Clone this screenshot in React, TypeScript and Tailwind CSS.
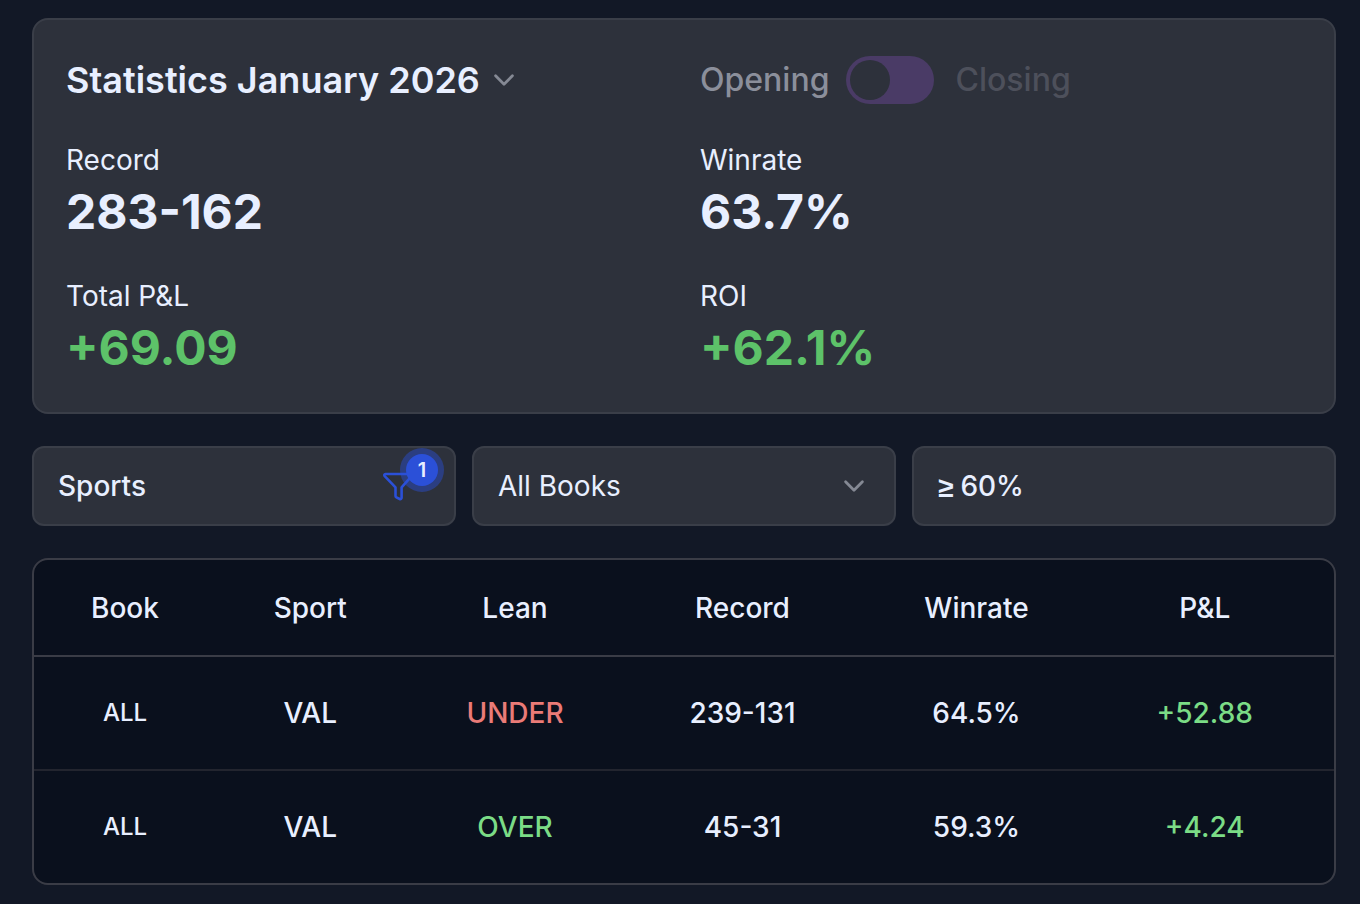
import { useState } from 'react'

interface Stat {
  label: string
  value: string
  positive?: boolean
}

interface Row {
  book: string
  sport: string
  lean: 'UNDER' | 'OVER'
  record: string
  winrate: string
  pnl: string
}

const stats: Stat[] = [
  { label: 'Record', value: '283-162' },
  { label: 'Winrate', value: '63.7%' },
  { label: 'Total P&L', value: '+69.09', positive: true },
  { label: 'ROI', value: '+62.1%', positive: true },
]

const columns = [
  { name: 'Book', width: 'w-[14%]' },
  { name: 'Sport', width: 'w-[14.5%]' },
  { name: 'Lean', width: 'w-[17%]' },
  { name: 'Record', width: 'w-[18%]' },
  { name: 'Winrate', width: 'w-[18%]' },
  { name: 'P&L', width: 'w-[18.5%]' },
]

const rows: Row[] = [
  { book: 'ALL', sport: 'VAL', lean: 'UNDER', record: '239-131', winrate: '64.5%', pnl: '+52.88' },
  { book: 'ALL', sport: 'VAL', lean: 'OVER', record: '45-31', winrate: '59.3%', pnl: '+4.24' },
]

function Chevron({ className = '' }: { className?: string }) {
  return (
    <svg
      viewBox="0 0 16 16"
      fill="none"
      stroke="currentColor"
      strokeWidth="1.4"
      strokeLinecap="round"
      strokeLinejoin="round"
      className={`pointer-events-none size-8 shrink-0 text-[#858994] ${className}`}
      aria-hidden="true"
    >
      <path d="M3.8 5.9 8 10.1l4.2-4.2" />
    </svg>
  )
}

function FunnelIcon() {
  return (
    <svg
      viewBox="0 0 32 32"
      fill="none"
      stroke="currentColor"
      strokeWidth="2.6"
      strokeLinejoin="round"
      className="size-8 text-[#2b50d8]"
      aria-hidden="true"
    >
      <path d="M3.5 4h25c1.3 0 1.9 1.3 1.100 2.200L19.600 17.400v10.400c0 1.100-.9 1.600-1.900 1.200l-3.300-1.700c-.6-.3-.9-.8-.9-1.400v-8.500L2.700 6.200C1.900 5.300 2.300 4 3.500 4Z" />
    </svg>
  )
}

function StatisticsCard() {
  const [closing, setClosing] = useState(false)

  return (
    <section className="rounded-2xl border-2 border-[#3a3e48] bg-[#2d313b] p-8">
      <div className="grid grid-cols-2 gap-8">
        <h1 className="flex h-14 items-center">
          <select
            aria-label="Period"
            className="cursor-pointer appearance-none bg-transparent pr-10 text-4xl leading-14 font-semibold [field-sizing:content]"
          >
            <option>Statistics January 2026</option>
          </select>
          <Chevron className="-ml-8" />
        </h1>

        <div className="flex items-center text-[32px] font-medium">
          <span className="text-[#8b8f9b]">Opening</span>
          <button
            type="button"
            role="switch"
            aria-checked={closing}
            aria-label="Use closing lines"
            onClick={() => setClosing(!closing)}
            className="mr-[22px] ml-4 flex h-12 w-22 items-center rounded-full bg-[#4a3b66] p-1"
          >
            <span
              className={`size-10 rounded-full bg-[#2d313b] transition-transform ${closing ? 'translate-x-10' : ''}`}
            />
          </button>
          <span className="text-[#4d505b]">Closing</span>
        </div>

        {stats.map((stat) => (
          <div key={stat.label}>
            <p className="text-[28px] leading-10">{stat.label}</p>
            <p className={`text-5xl leading-16 font-bold ${stat.positive ? 'text-[#5dc269]' : ''}`}>
              {stat.value}
            </p>
          </div>
        ))}
      </div>
    </section>
  )
}

function Filters() {
  const box = 'h-20 rounded-xl border-2 border-[#3a3e48] bg-[#2d313b] px-6 text-[28px]'

  return (
    <div className="grid grid-cols-3 gap-4">
      <button
        type="button"
        className={`relative flex items-center justify-between font-medium ${box}`}
      >
        Sports
        <span className="mr-4">
          <FunnelIcon />
        </span>
        <span className="absolute top-0 right-2.5 flex size-11 items-center justify-center rounded-full bg-[#2b50d8]/45">
          <span className="flex size-8 items-center justify-center rounded-full bg-[#2b50d8] text-xl font-semibold">
            1
          </span>
        </span>
      </button>

      <div className="relative flex items-center">
        <select aria-label="Books" className={`w-full cursor-pointer appearance-none ${box}`}>
          <option>All Books</option>
        </select>
        <Chevron className="absolute right-[26px]" />
      </div>

      <label className={`flex items-center gap-[7px] font-medium ${box}`}>
        <span className="pt-1 font-['Liberation_Sans',sans-serif] font-bold">≥</span>
        <input
          type="text"
          aria-label="Minimum winrate"
          defaultValue="60%"
          className="w-full min-w-0 bg-transparent outline-none"
        />
      </label>
    </div>
  )
}

function ResultsTable() {
  return (
    <div className="overflow-hidden rounded-2xl border-2 border-[#3a3c46] bg-[#0a101d]">
      <table className="w-full table-fixed border-collapse text-center text-[28px] font-medium">
        <thead>
          <tr className="h-24 border-b-2 border-[#3a3c46]">
            {columns.map((column) => (
              <th key={column.name} scope="col" className={`font-medium last:pr-[18px] ${column.width}`}>
                {column.name}
              </th>
            ))}
          </tr>
        </thead>
        <tbody>
          {rows.map((row) => (
            <tr
              key={row.lean}
              className="h-[114px] border-b-2 border-[#23252f] last:h-[113px] last:border-b-0"
            >
              <td className="text-2xl">{row.book}</td>
              <td>{row.sport}</td>
              <td className={row.lean === 'OVER' ? 'text-[#7bdc86]' : 'text-[#ea7b77]'}>
                {row.lean}
              </td>
              <td>{row.record}</td>
              <td>{row.winrate}</td>
              <td className="pr-[18px] text-[#7bdc86]">{row.pnl}</td>
            </tr>
          ))}
        </tbody>
      </table>
    </div>
  )
}

function App() {
  return (
    <main className="flex min-h-screen flex-col gap-8 bg-[#121826] pt-[18px] pr-6 pb-4 pl-8 font-[Inter,sans-serif] text-[#e8efff]">
      <StatisticsCard />
      <Filters />
      <ResultsTable />
    </main>
  )
}

export default App
